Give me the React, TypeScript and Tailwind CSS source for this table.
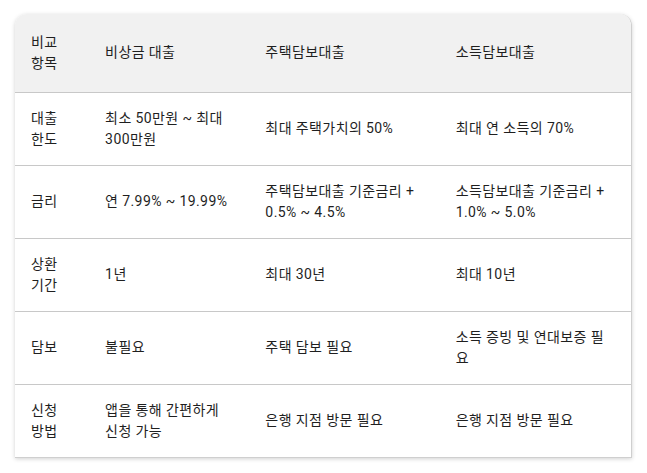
const rows: string[][] = [
  ['대출 한도', '최소 50만원 ~ 최대 300만원', '최대 주택가치의 50%', '최대 연 소득의 70%'],
  ['금리', '연 7.99% ~ 19.99%', '주택담보대출 기준금리 + 0.5% ~ 4.5%', '소득담보대출 기준금리 + 1.0% ~ 5.0%'],
  ['상환 기간', '1년', '최대 30년', '최대 10년'],
  ['담보', '불필요', '주택 담보 필요', '소득 증빙 및 연대보증 필요'],
  ['신청 방법', '앱을 통해 간편하게 신청 가능', '은행 지점 방문 필요', '은행 지점 방문 필요'],
];

const widths = ['w-[74px]', 'w-[160px]', 'w-[190px]', 'w-[191px]'];

export default function App() {
  return (
    <div
      className="min-h-[473px] w-[647px] bg-white pl-[15px] pt-[14px] text-[14px] leading-[21px] tracking-[0.4px] text-[#1f1f1f]"
      style={{ fontFamily: 'Roboto, "Noto Sans CJK KR", sans-serif' }}
    >
      <div className="w-[617px] overflow-hidden rounded-t-[12px] border-r border-b border-[#cfcfcf] bg-white shadow-[0_1px_4px_rgba(0,0,0,0.18)]">
        <table className="w-full table-fixed border-collapse">
          <colgroup>
            {widths.map((w, i) => (
              <col key={i} className={w} />
            ))}
          </colgroup>
          <thead>
            <tr className="bg-[#f1f1f1] border-b border-[#c8c8c8]">
              {['비교 항목', '비상금 대출', '주택담보대출', '소득담보대출'].map((h, i) => (
                <th key={i} className="h-[78px] px-4 text-left align-middle font-normal">
                  {h}
                </th>
              ))}
            </tr>
          </thead>
          <tbody>
            {rows.map((r, ri) => (
              <tr key={ri} className={ri < rows.length - 1 ? 'border-b border-[#c8c8c8]' : ''}>
                {r.map((c, ci) => (
                  <td key={ci} className="h-[73px] px-4 align-middle">
                    {c}
                  </td>
                ))}
              </tr>
            ))}
          </tbody>
        </table>
      </div>
    </div>
  );
}
